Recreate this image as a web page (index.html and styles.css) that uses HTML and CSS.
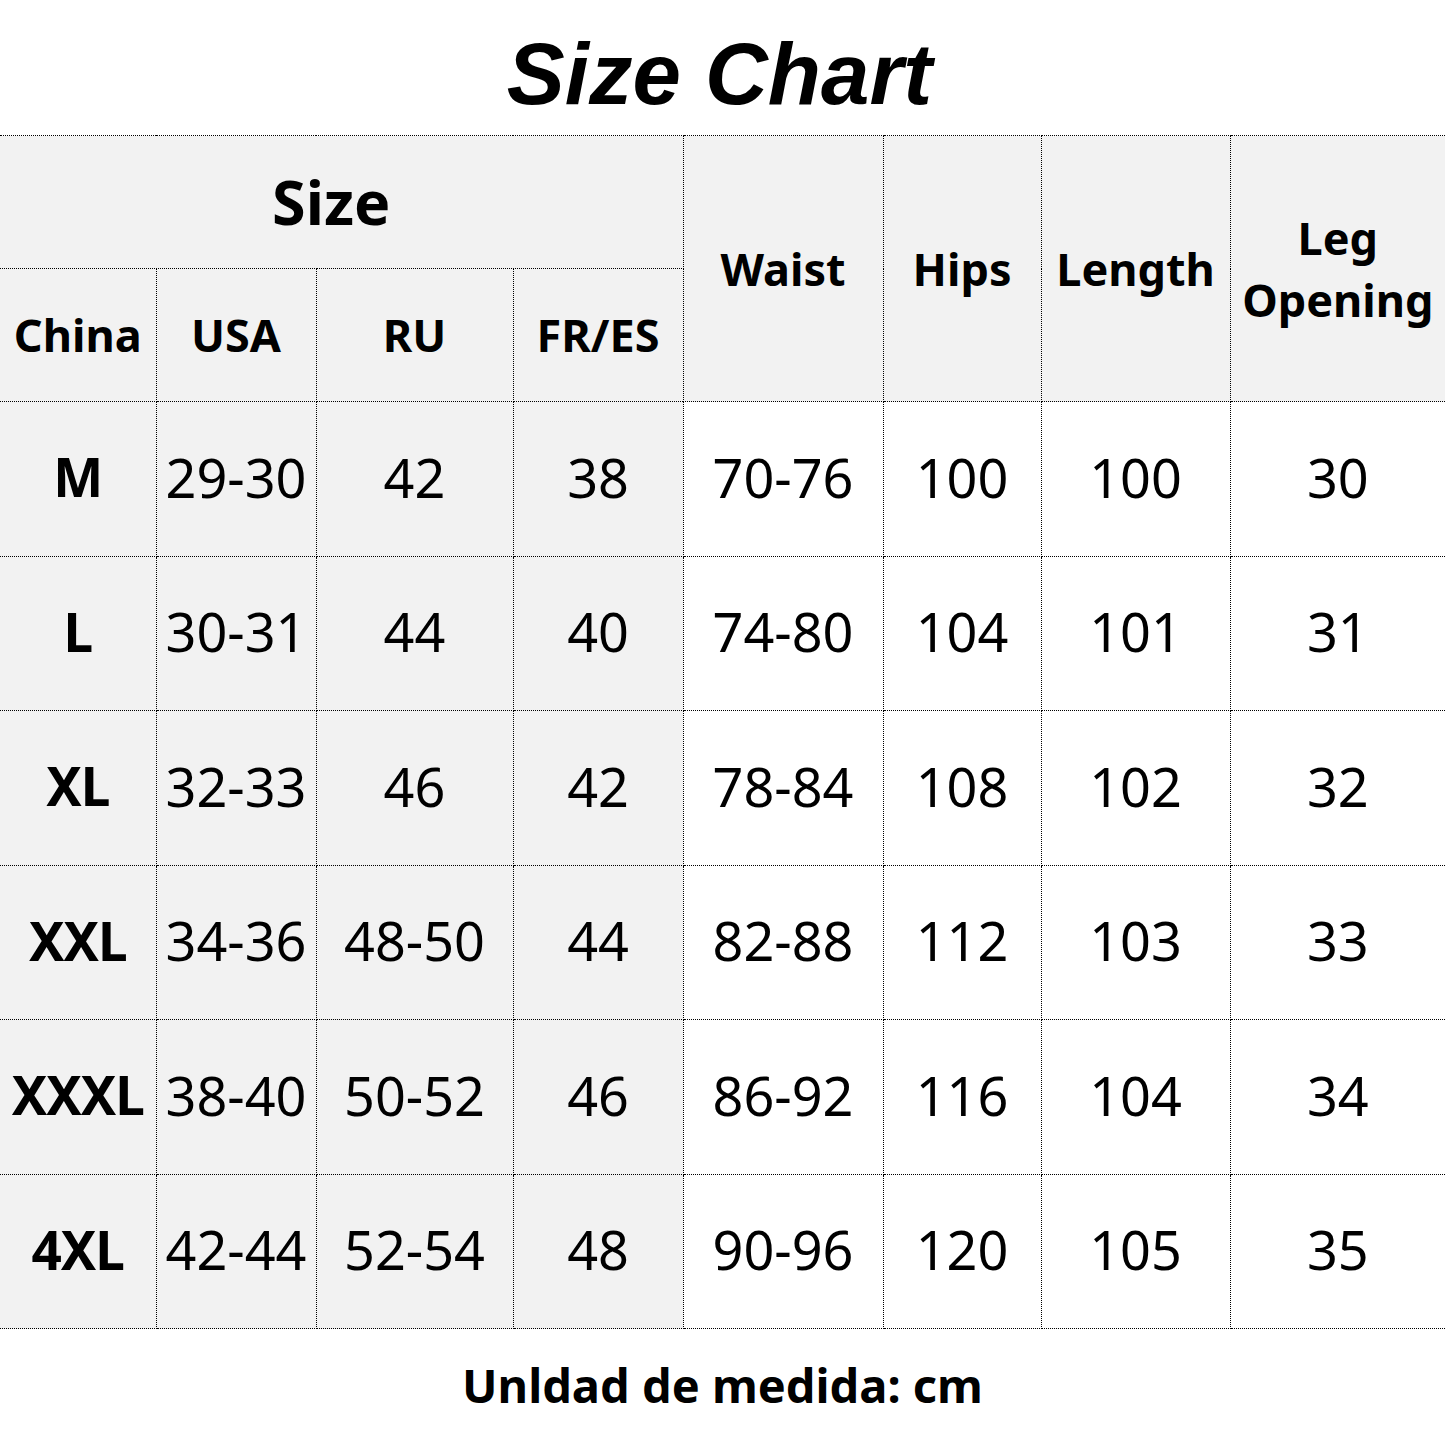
FILE: index.html
```html
<!DOCTYPE html>
<html>
<head>
<meta charset="utf-8">
<link rel="stylesheet" href="styles.css">
</head>
<body>
<div class="page">
  <h1 class="title">Size Chart</h1>
  <table class="chart">
    <colgroup>
      <col class="c1"><col class="c2"><col class="c3"><col class="c4">
      <col class="c5"><col class="c6"><col class="c7"><col class="c8">
    </colgroup>
    <thead>
      <tr class="h1row">
        <th colspan="4" class="size-head">Size</th>
        <th rowspan="2">Waist</th>
        <th rowspan="2">Hips</th>
        <th rowspan="2">Length</th>
        <th rowspan="2" class="two-line">Leg<br>Opening</th>
      </tr>
      <tr class="h2row">
        <th>China</th>
        <th>USA</th>
        <th>RU</th>
        <th>FR/ES</th>
      </tr>
    </thead>
    <tbody>
      <tr><td class="sz">M</td><td class="g">29-30</td><td class="g">42</td><td class="g">38</td><td>70-76</td><td>100</td><td>100</td><td>30</td></tr>
      <tr><td class="sz">L</td><td class="g">30-31</td><td class="g">44</td><td class="g">40</td><td>74-80</td><td>104</td><td>101</td><td>31</td></tr>
      <tr><td class="sz">XL</td><td class="g">32-33</td><td class="g">46</td><td class="g">42</td><td>78-84</td><td>108</td><td>102</td><td>32</td></tr>
      <tr><td class="sz">XXL</td><td class="g">34-36</td><td class="g">48-50</td><td class="g">44</td><td>82-88</td><td>112</td><td>103</td><td>33</td></tr>
      <tr><td class="sz">XXXL</td><td class="g">38-40</td><td class="g">50-52</td><td class="g">46</td><td>86-92</td><td>116</td><td>104</td><td>34</td></tr>
      <tr><td class="sz">4XL</td><td class="g">42-44</td><td class="g">52-54</td><td class="g">48</td><td>90-96</td><td>120</td><td>105</td><td>35</td></tr>
    </tbody>
  </table>
  <p class="note">Unldad de medida: cm</p>
</div>
</body>
</html>
```
FILE: styles.css
```css
html, body {
  margin: 0;
  padding: 0;
  background: #ffffff;
}
body {
  font-family: "Noto Sans", "Open Sans", sans-serif;
  color: #000;
}
.page {
  width: 1445px;
  height: 1445px;
  display: flex;
  flex-direction: column;
}
.title {
  margin: 0;
  height: 135px;
  display: flex;
  align-items: center;
  justify-content: center;
  font-family: "Liberation Sans", Arial, sans-serif;
  font-style: italic;
  font-weight: bold;
  font-size: 87px;
  letter-spacing: 0;
  padding-right: 6px;
  box-sizing: border-box;
  padding-top: 12px;
}
.chart {
  width: 1445px;
  border-collapse: collapse;
  table-layout: fixed;
}
.c1 { width: 156px; }
.c2 { width: 160px; }
.c3 { width: 197px; }
.c4 { width: 170px; }
.c5 { width: 200px; }
.c6 { width: 158px; }
.c7 { width: 189px; }
.c8 { width: 215px; }
.chart th, .chart td {
  border: 1px dotted #000;
  padding: 0;
  text-align: center;
  vertical-align: middle;
  white-space: nowrap;
}
.chart tr > :first-child { border-left: none; }
.chart tr > :last-child { border-right: none; }
.chart th {
  background: #f2f2f2;
  font-weight: bold;
  font-size: 45px;
  line-height: 62px;
}
.h1row { height: 133px; }
.h2row { height: 133px; }
.chart .size-head {
  font-size: 61px;
  padding-right: 20px;
}
.chart .h2row th {
  padding-top: 0;
}
.chart .two-line {
  line-height: 62px;
}
.chart tbody tr { height: 154.5px; }
.chart td {
  font-size: 54px;
  background: #ffffff;
  padding-bottom: 4px;
}
.chart td.g { background: #f2f2f2; }
.chart td.sz {
  background: #f2f2f2;
  font-weight: bold;
  font-size: 53px;
  letter-spacing: -1px;
}
.note {
  margin: 0;
  height: 112px;
  display: flex;
  align-items: center;
  justify-content: center;
  font-weight: bold;
  font-size: 47px;
}
```
